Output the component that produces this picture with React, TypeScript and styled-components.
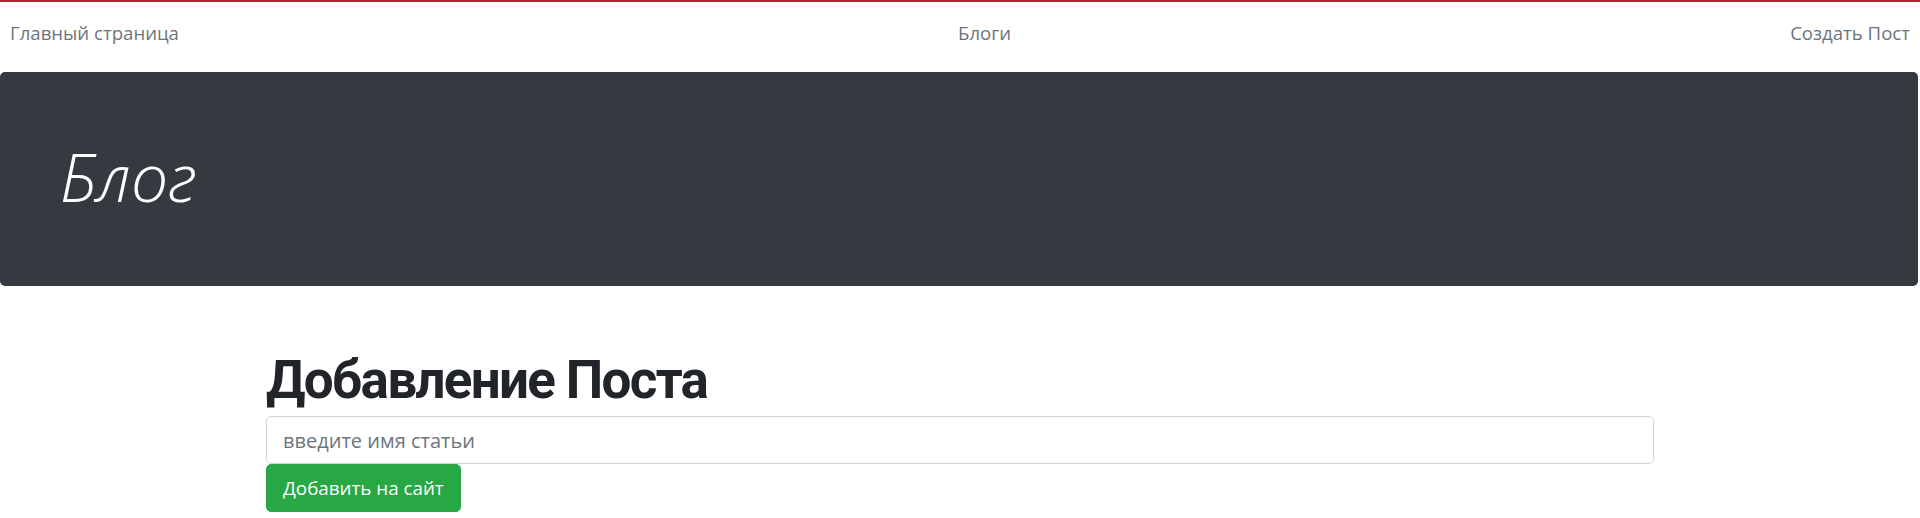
import React from "react";
import styled, { createGlobalStyle } from "styled-components";

const GlobalStyle = createGlobalStyle`
  html, body {
    margin: 0;
    padding: 0;
    background: #ffffff;
  }
  body {
    font-family: "Open Sans", "Noto Sans", "Liberation Sans", sans-serif;
    color: #212529;
    -webkit-font-smoothing: antialiased;
  }
  * { box-sizing: border-box; }
`;

const TopNav = styled.nav`
  display: flex;
  justify-content: space-between;
  align-items: center;
  height: 72px;
  padding: 0 10px 8px 10px;
  border-top: 2px solid #bb232f;
`;

const NavLink = styled.a`
  font-size: 18.6px;
  line-height: 30px;
  color: #6c757d;
  text-decoration: none;
  cursor: pointer;
`;

const Jumbotron = styled.header`
  display: flex;
  align-items: center;
  height: 214px;
  margin-right: 2px;
  padding-left: 60px;
  background: #343a40;
  border-radius: 5px;
`;

const BrandTitle = styled.h1`
  margin: 0 0 4px 0;
  font-size: 66px;
  font-weight: 300;
  font-style: italic;
  line-height: 1.2;
  color: #ffffff;
`;

const Main = styled.main`
  width: 1388px;
  margin: 0 auto;
  padding-top: 61px;
`;

const PageTitle = styled.h2`
  margin: 0 0 2px 0;
  font-family: Roboto, "Open Sans", sans-serif;
  font-size: 53px;
  font-weight: 700;
  letter-spacing: -1.7px;
  line-height: 67px;
  color: #212529;
`;

const TitleInput = styled.input`
  display: block;
  width: 100%;
  height: 48px;
  padding: 8px 16px;
  font-family: inherit;
  font-size: 20px;
  line-height: 30px;
  color: #495057;
  background: #ffffff;
  border: 1px solid #ced4da;
  border-radius: 5px;
  outline: none;
  &::placeholder {
    color: #6c757d;
  }
`;

const SubmitButton = styled.button`
  display: inline-block;
  height: 48px;
  padding: 8px 16px;
  font-family: inherit;
  font-size: 18.8px;
  line-height: 30px;
  color: #ffffff;
  background: #28a745;
  border: 1px solid #28a745;
  border-radius: 5px;
  cursor: pointer;
`;

export default function App() {
  return (
    <>
      <GlobalStyle />
      <TopNav>
        <NavLink>Главный страница</NavLink>
        <NavLink>Блоги</NavLink>
        <NavLink>Создать Пост</NavLink>
      </TopNav>
      <Jumbotron>
        <BrandTitle>Блог</BrandTitle>
      </Jumbotron>
      <Main>
        <PageTitle>Добавление Поста</PageTitle>
        <form onSubmit={(e) => e.preventDefault()}>
          <TitleInput type="text" placeholder="введите имя статьи" />
          <SubmitButton type="submit">Добавить на сайт</SubmitButton>
        </form>
      </Main>
    </>
  );
}
